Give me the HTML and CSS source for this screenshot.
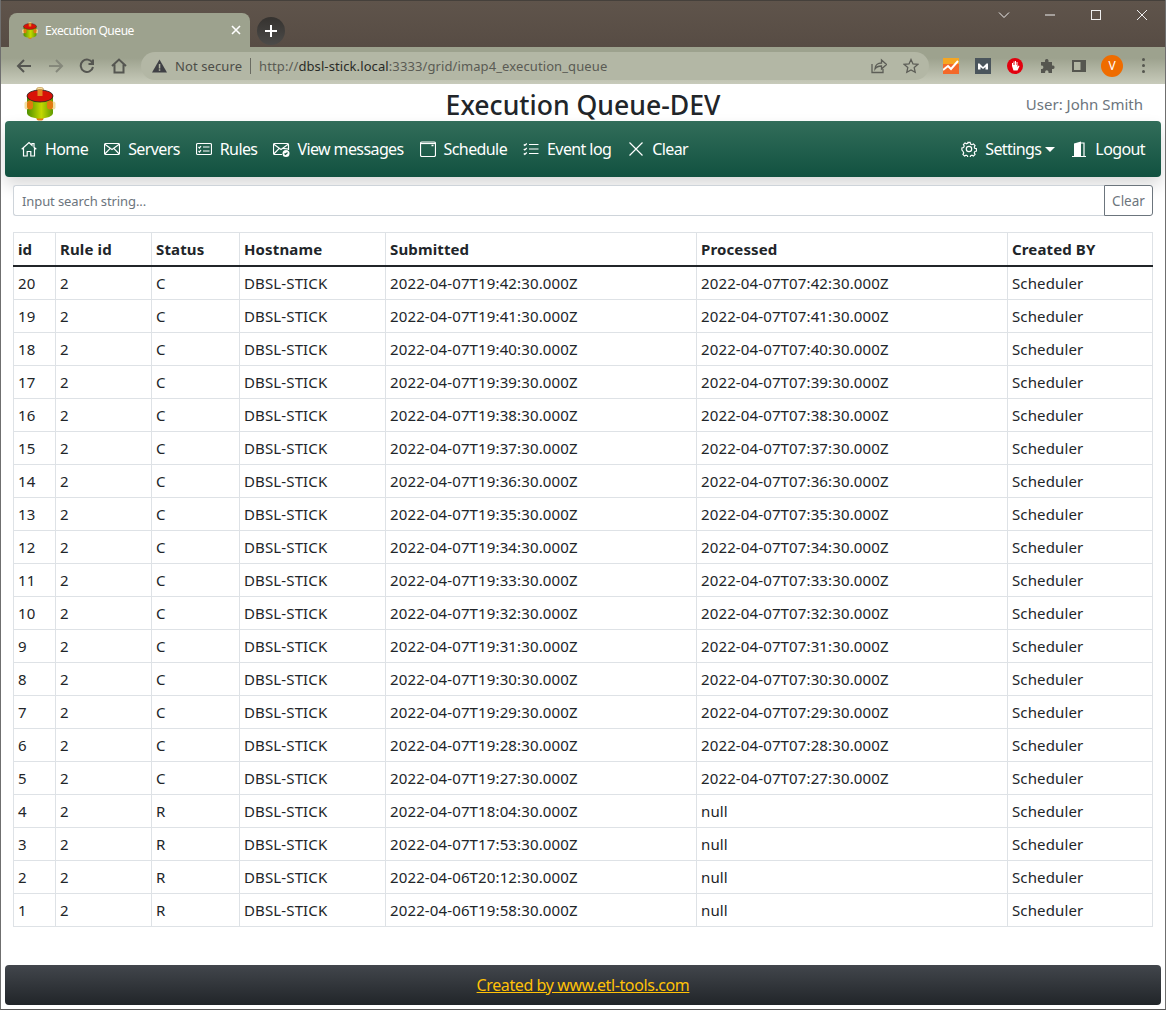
FILE: index.html

```html
<!DOCTYPE html>
<html lang="en">
<head>
  <meta charset="UTF-8" />
  <title>Execution Queue</title>
  <link rel="stylesheet" href="styles.css">
</head>
<body>
  <svg class="defs" width="0" height="0">
    <defs>
      <linearGradient id="drum" x1="0" x2="1" y1="0" y2="0">
        <stop offset="0" stop-color="#4d8f00" />
        <stop offset="0.55" stop-color="#c4d800" />
        <stop offset="1" stop-color="#5f9a00" />
      </linearGradient>
      <symbol id="logo" viewBox="0 0 32 34">
        <rect x="12.5" y="0.5" width="7" height="7" rx="2" fill="#f3dfa0" stroke="#b98a3c" stroke-width="0.6" />
        <rect x="12.5" y="28" width="7" height="5.5" rx="2" fill="#e07a10" />
        <path d="M3 9v17c0 3 6 5.500 13 5.500s13-2.500 13-5.500V9z" fill="url(#drum)" />
        <ellipse cx="16" cy="9" rx="13" ry="6" fill="#d81208" stroke="#222" stroke-width="0.8" />
        <rect x="13.500" y="2.500" width="5" height="6.500" fill="#e08a20" />
        <rect x="0.500" y="14.500" width="4" height="8" rx="2" fill="#f3dfa0" />
        <rect x="3" y="13.500" width="6" height="9" rx="3" fill="#e07a10" />
        <rect x="27.500" y="14.500" width="4" height="8" rx="2" fill="#f3dfa0" />
        <rect x="23" y="13.500" width="6" height="9" rx="3" fill="#e07a10" />
      </symbol>
    </defs>
  </svg>

  <div class="chrome">
    <div class="tabstrip">
      <div class="tab">
        <svg class="favicon" width="16" height="17"><use href="#logo" /></svg>
        <span class="tab-title">Execution Queue</span>
        <svg class="tab-close" width="10" height="10" viewBox="0 0 10 10"><path d="M1 1l8 8M9 1l-8 8" /></svg>
      </div>
      <div class="new-tab">
        <svg width="14" height="14" viewBox="0 0 14 14"><path d="M7 1v12M1 7h12" /></svg>
      </div>
      <div class="win-controls">
        <svg width="12" height="12" viewBox="0 0 12 12"><path d="M1 3.500l5 5 5-5" /></svg>
        <svg width="12" height="12" viewBox="0 0 12 12"><path d="M1 6h10" /></svg>
        <svg width="12" height="12" viewBox="0 0 12 12"><rect x="1.500" y="1.500" width="9" height="9" /></svg>
        <svg width="12" height="12" viewBox="0 0 12 12"><path d="M1 1l10 10M11 1L1 11" /></svg>
      </div>
    </div>
    <div class="toolbar">
      <svg class="tool" width="16" height="16" viewBox="0 0 16 16"><path d="M15 8H2M8 2L2 8l6 6" /></svg>
      <svg class="tool tool-off" width="16" height="16" viewBox="0 0 16 16"><path d="M1 8h13M8 2l6 6-6 6" /></svg>
      <svg class="tool" width="16" height="16" viewBox="0 0 16 16"><path d="M13.500 5A6.200 6.200 0 1 0 14 9M14 1.500V6H9.500" /></svg>
      <svg class="tool" width="16" height="16" viewBox="0 0 16 16"><path d="M1 8l7-6.500L15 8M3.500 6.500V14.500h9V6.500" /></svg>
      <div class="omnibox">
        <svg class="warn" width="15" height="14" viewBox="0 0 15 14"><path d="M7.500 0.500L15 13.500H0z" /><rect class="warn-mark" x="6.800" y="5" width="1.500" height="4.500" /><rect class="warn-mark" x="6.800" y="10.300" width="1.500" height="1.500" /></svg>
        <span class="not-secure">Not secure</span>
        <span class="omni-sep"></span>
        <span class="url">http://<b>dbsl-stick.local</b>:3333/grid/imap4_execution_queue</span>
        <svg class="omni-icon share" width="16" height="16" viewBox="0 0 16 16"><path d="M1 6v8.500h11V11M4 11c0-4 3-6 6.500-6V2l5 4.500-5 4.500V8C8 8 5.500 8.500 4 11z" /></svg>
        <svg class="omni-icon" width="16" height="16" viewBox="0 0 16 16"><path d="M8 1.500l2 4.400 4.800.5-3.600 3.200 1 4.700L8 11.900l-4.200 2.400 1-4.700L1.200 6.400 6 5.900z" /></svg>
      </div>
      <div class="extensions">
        <svg width="16" height="16" viewBox="0 0 16 16"><rect width="16" height="16" fill="#f4692a" /><rect width="16" height="6" fill="#f5a623" /><path class="ext-line" d="M0 12l5-4 3 3 7-8" /></svg>
        <svg width="16" height="16" viewBox="0 0 16 16"><rect width="16" height="16" fill="#4a555c" /><path class="ext-m" d="M3 11.500V5.500h1.500L8 9l3.500-3.500H13v6h-2.500V9L8 11 5.500 9v2.500z" /></svg>
        <svg width="16" height="16" viewBox="0 0 16 16"><circle cx="8" cy="8" r="8" fill="#e2000f" /><path class="ext-m" d="M5 8V5h1v2h.500V3.500h1V7H8V3h1v4h.500V4h1v5l1-1.500 1 .5-2 4.500H6.500z" /></svg>
        <svg width="16" height="16" viewBox="0 0 16 16"><path class="ext-fill" d="M6 2.500a1.800 1.800 0 0 1 3.500 0V4H13v3.500h1.200a1.800 1.800 0 0 1 0 3.500H13v4H9.500v-1a1.700 1.700 0 0 0-3.400 0v1H2v-4h1a1.800 1.800 0 0 0 0-3.500H2V4h4z" /></svg>
        <svg width="16" height="16" viewBox="0 0 16 16"><rect x="1" y="2" width="14" height="12" class="ext-fill" /><rect x="3" y="4" width="6.500" height="8" fill="#b2b6a3" /></svg>
        <span class="avatar">V</span>
        <span class="kebab"><i></i><i></i><i></i></span>
      </div>
    </div>
  </div>

  <div class="page">
    <header class="app-head">
      <svg class="app-logo" width="32" height="34"><use href="#logo" /></svg>
      <h1>Execution Queue-DEV</h1>
      <span class="user">User: John Smith</span>
    </header>

    <nav class="navbar">
      <a class="nav-item"><svg class="ico" viewBox="0 0 16 16"><path d="M.7 8.300L8 1.500l3 2.800V2.500h2v3.700l2.300 2.100M2.500 7v8h3.700v-4.500h3.600V15h3.700V7" /></svg>Home</a>
      <a class="nav-item"><svg class="ico" viewBox="0 0 16 16"><rect x=".5" y="2.500" width="15" height="11" rx="1.300" /><path d="M.8 3.200L8 8.500l7.200-5.300M.8 13l5.400-5.700M15.200 13L9.800 7.300" /></svg>Servers</a>
      <a class="nav-item"><svg class="ico" viewBox="0 0 16 16"><rect x=".5" y="2.500" width="15" height="11" rx="1.300" /><path d="M7 6h6.500M7 10h6.500M2.500 6l1 1 1.500-2M2.500 10l1 1 1.500-2" /></svg>Rules</a>
      <a class="nav-item"><svg class="ico ico-wide" viewBox="0 0 17 16"><path d="M9 13.500H2A1.300 1.300 0 0 1 .5 12.200V3.800A1.300 1.300 0 0 1 2 2.500h12a1.300 1.300 0 0 1 1.500 1.300V9" /><path d="M.8 3.200L8 8.500l7.200-5.300M.8 13l5.400-5.700M15.200 8L9.800 7.300" /><circle class="ico-solid" cx="13" cy="12.500" r="3.500" /><path class="ico-tick" d="M11.500 12.500l1 1 2-2" /></svg>View messages</a>
      <a class="nav-item"><svg class="ico" viewBox="0 0 16 16"><rect x=".5" y="1" width="15" height="14.500" rx="1.500" /><path d="M1 2.500h14" /><path class="ico-dash" d="M11.500 4.500h2" /></svg>Schedule</a>
      <a class="nav-item"><svg class="ico" viewBox="0 0 16 16"><path d="M6 3.500h9.500M6 8h9.500M6 12.500h9.500M.8 3.500l1 1 2-2M.8 8l1 1 2-2M.8 12.500l1 1 2-2" /></svg>Event log</a>
      <a class="nav-item nav-clear"><svg class="ico ico-x" viewBox="0 0 14 14"><path d="M.5.500l13 13M13.500.500l-13 13" /></svg>Clear</a>
      <span class="nav-gap"></span>
      <a class="nav-item"><svg class="ico" viewBox="0 0 16 16"><circle cx="8" cy="8" r="2.700" /><path d="M6.800 1h2.400l.4 1.800 1.500.7 1.600-.9 1.700 1.700-.9 1.600.7 1.500 1.800.4v2.400l-1.800.4-.7 1.500.9 1.600-1.700 1.700-1.600-.9-1.500.7-.4 1.800H6.800l-.4-1.800-1.500-.7-1.600.9-1.700-1.700.9-1.600-.7-1.500L.5 9.200V6.800l1.800-.4.700-1.500-.9-1.600 1.700-1.700 1.600.9 1.500-.7z" transform="translate(.4 .4) scale(.95)" /></svg>Settings<span class="caret"></span></a>
      <a class="nav-item"><svg class="ico" viewBox="0 0 16 16"><path class="door" d="M3 15V2.500L10 .5V15z" /><path d="M1 15.500h14M10 2h3v13.500" /></svg>Logout</a>
    </nav>

    <div class="search">
      <input class="search-input" type="text" placeholder="Input search string...">
      <button class="search-clear">Clear</button>
    </div>

    <div class="grid-wrap">
      <table class="grid">
        <colgroup>
          <col class="c-id"><col class="c-rule"><col class="c-status"><col class="c-host"><col class="c-date"><col class="c-date"><col>
        </colgroup>
        <thead>
          <tr>
            <th>id</th>
            <th>Rule id</th>
            <th>Status</th>
            <th>Hostname</th>
            <th>Submitted</th>
            <th>Processed</th>
            <th>Created BY</th>
          </tr>
        </thead>
        <tbody>
          <tr><td>20</td><td>2</td><td>C</td><td>DBSL-STICK</td><td>2022-04-07T19:42:30.000Z</td><td>2022-04-07T07:42:30.000Z</td><td>Scheduler</td></tr>
          <tr><td>19</td><td>2</td><td>C</td><td>DBSL-STICK</td><td>2022-04-07T19:41:30.000Z</td><td>2022-04-07T07:41:30.000Z</td><td>Scheduler</td></tr>
          <tr><td>18</td><td>2</td><td>C</td><td>DBSL-STICK</td><td>2022-04-07T19:40:30.000Z</td><td>2022-04-07T07:40:30.000Z</td><td>Scheduler</td></tr>
          <tr><td>17</td><td>2</td><td>C</td><td>DBSL-STICK</td><td>2022-04-07T19:39:30.000Z</td><td>2022-04-07T07:39:30.000Z</td><td>Scheduler</td></tr>
          <tr><td>16</td><td>2</td><td>C</td><td>DBSL-STICK</td><td>2022-04-07T19:38:30.000Z</td><td>2022-04-07T07:38:30.000Z</td><td>Scheduler</td></tr>
          <tr><td>15</td><td>2</td><td>C</td><td>DBSL-STICK</td><td>2022-04-07T19:37:30.000Z</td><td>2022-04-07T07:37:30.000Z</td><td>Scheduler</td></tr>
          <tr><td>14</td><td>2</td><td>C</td><td>DBSL-STICK</td><td>2022-04-07T19:36:30.000Z</td><td>2022-04-07T07:36:30.000Z</td><td>Scheduler</td></tr>
          <tr><td>13</td><td>2</td><td>C</td><td>DBSL-STICK</td><td>2022-04-07T19:35:30.000Z</td><td>2022-04-07T07:35:30.000Z</td><td>Scheduler</td></tr>
          <tr><td>12</td><td>2</td><td>C</td><td>DBSL-STICK</td><td>2022-04-07T19:34:30.000Z</td><td>2022-04-07T07:34:30.000Z</td><td>Scheduler</td></tr>
          <tr><td>11</td><td>2</td><td>C</td><td>DBSL-STICK</td><td>2022-04-07T19:33:30.000Z</td><td>2022-04-07T07:33:30.000Z</td><td>Scheduler</td></tr>
          <tr><td>10</td><td>2</td><td>C</td><td>DBSL-STICK</td><td>2022-04-07T19:32:30.000Z</td><td>2022-04-07T07:32:30.000Z</td><td>Scheduler</td></tr>
          <tr><td>9</td><td>2</td><td>C</td><td>DBSL-STICK</td><td>2022-04-07T19:31:30.000Z</td><td>2022-04-07T07:31:30.000Z</td><td>Scheduler</td></tr>
          <tr><td>8</td><td>2</td><td>C</td><td>DBSL-STICK</td><td>2022-04-07T19:30:30.000Z</td><td>2022-04-07T07:30:30.000Z</td><td>Scheduler</td></tr>
          <tr><td>7</td><td>2</td><td>C</td><td>DBSL-STICK</td><td>2022-04-07T19:29:30.000Z</td><td>2022-04-07T07:29:30.000Z</td><td>Scheduler</td></tr>
          <tr><td>6</td><td>2</td><td>C</td><td>DBSL-STICK</td><td>2022-04-07T19:28:30.000Z</td><td>2022-04-07T07:28:30.000Z</td><td>Scheduler</td></tr>
          <tr><td>5</td><td>2</td><td>C</td><td>DBSL-STICK</td><td>2022-04-07T19:27:30.000Z</td><td>2022-04-07T07:27:30.000Z</td><td>Scheduler</td></tr>
          <tr><td>4</td><td>2</td><td>R</td><td>DBSL-STICK</td><td>2022-04-07T18:04:30.000Z</td><td>null</td><td>Scheduler</td></tr>
          <tr><td>3</td><td>2</td><td>R</td><td>DBSL-STICK</td><td>2022-04-07T17:53:30.000Z</td><td>null</td><td>Scheduler</td></tr>
          <tr><td>2</td><td>2</td><td>R</td><td>DBSL-STICK</td><td>2022-04-06T20:12:30.000Z</td><td>null</td><td>Scheduler</td></tr>
          <tr><td>1</td><td>2</td><td>R</td><td>DBSL-STICK</td><td>2022-04-06T19:58:30.000Z</td><td>null</td><td>Scheduler</td></tr>
        </tbody>
      </table>
    </div>

    <footer class="footer">
      <a class="footer-link" href="#">Created by www.etl-tools.com</a>
    </footer>
  </div>
</body>
</html>
```

FILE: styles.css

```css
* {
  box-sizing: border-box;
}
html, body {
  margin: 0;
  height: 1010px;
  overflow: hidden;
}
body {
  font-family: "Noto Sans", "Open Sans", sans-serif;
  font-size: 16px;
  color: #212529;
  background-color: #fff;
  display: flex;
  flex-direction: column;
  border-left: 1px solid #6f6f6f;
  border-right: 1px solid #6f6f6f;
  border-bottom: 1px solid #555;
}
.defs {
  position: absolute;
}

/* browser frame */
.chrome {
  height: 84px;
  flex: none;
  border-top: 1px solid #45403b;
  border-bottom: 1px solid #77796f;
}
.tabstrip {
  height: 46px;
  display: flex;
  align-items: flex-end;
  background: linear-gradient(#5f544b, #574c44);
  padding-left: 8px;
}
.tab {
  width: 241px;
  height: 34px;
  display: flex;
  align-items: center;
  padding: 0 9px 0 13px;
  background-color: #9da28e;
  border-radius: 8px 8px 0 0;
  color: #fff;
}
.favicon {
  flex: none;
}
.tab-title {
  font-size: 12px;
  margin-left: 7px;
  flex: 1;
  letter-spacing: -0.45px;
}
.tab-close path {
  stroke: #fff;
  stroke-width: 1.6;
  fill: none;
}
.new-tab {
  width: 28px;
  height: 28px;
  margin: 0 0 2px 7px;
  border-radius: 50%;
  background: linear-gradient(#35322f, #4c4b49);
  display: flex;
  align-items: center;
  justify-content: center;
}
.new-tab path {
  stroke: #fff;
  stroke-width: 2;
}
.win-controls {
  margin-left: auto;
  align-self: flex-start;
  display: flex;
  gap: 34px;
  padding: 8px 17px 0 0;
}
.win-controls svg {
  fill: none;
  stroke: #eee;
  stroke-width: 1;
}
.toolbar {
  height: 37px;
  display: flex;
  align-items: center;
  padding: 0 0 0 15px;
  background: linear-gradient(#9da28e 30%, #c8cbbb);
}
.tool {
  fill: none;
  stroke: #555651;
  stroke-width: 2;
  margin-right: 15.500px;
  flex: none;
}
.tool-off {
  stroke: #85887b;
}
.omnibox {
  width: 788px;
  height: 28px;
  margin-left: -1px;
  padding: 0 10px 0 11px;
  display: flex;
  align-items: center;
  background-color: #b3b7a5;
  border-radius: 14px;
  font-size: 13px;
  letter-spacing: 0.1px;
  color: #4c4d48;
}
.warn {
  fill: #3f4045;
  flex: none;
}
.warn-mark {
  fill: #b3b7a5;
}
.not-secure {
  margin-left: 8px;
}
.omni-sep {
  width: 1px;
  height: 16px;
  margin: 0 8px;
  background-color: #6a6b62;
}
.url {
  flex: 1;
  color: #5a5b54;
}
.url b {
  font-weight: 400;
  color: #2a2b27;
}
.omni-icon {
  fill: none;
  stroke: #5d5e57;
  stroke-width: 1.300;
  flex: none;
  margin-left: 16px;
}
.extensions {
  display: flex;
  align-items: center;
  gap: 16px;
  margin-left: 14px;
}
.ext-line {
  fill: none;
  stroke: #fff;
  stroke-width: 2;
}
.ext-m {
  fill: #fff;
}
.ext-fill {
  fill: #55564f;
}
.avatar {
  width: 22px;
  height: 22px;
  margin-left: -2px;
  border-radius: 50%;
  background-color: #ef6c00;
  color: #fff;
  font-size: 12px;
  display: flex;
  align-items: center;
  justify-content: center;
}
.kebab {
  display: flex;
  flex-direction: column;
  gap: 3px;
  margin-left: 3px;
}
.kebab i {
  width: 3px;
  height: 3px;
  border-radius: 50%;
  background-color: #55564f;
}

/* page */
.page {
  flex: 1;
  display: flex;
  flex-direction: column;
  padding: 0 4px 4px;
  min-height: 0;
}
.app-head {
  height: 37px;
  flex: none;
  position: relative;
  display: flex;
  justify-content: center;
}
.app-logo {
  position: absolute;
  left: 19px;
  top: 3px;
}
h1 {
  margin: 0;
  font-size: 26.600px;
  font-weight: 500;
  line-height: 43px;
  height: 37px;
}
.user {
  position: absolute;
  right: 18px;
  top: 10px;
  font-size: 15px;
  color: #6c757d;
}
.navbar {
  height: 56px;
  flex: none;
  display: flex;
  align-items: center;
  gap: 16px;
  padding: 0 16px;
  background: linear-gradient(#326d5a, #115140);
  border-radius: 4px;
  box-shadow: 0 8px 16px rgba(0, 0, 0, 0.15);
  color: #fff;
}
.nav-item {
  display: flex;
  align-items: center;
  white-space: nowrap;
  letter-spacing: -0.6px;
}
.nav-gap {
  flex: 1;
}
.ico {
  width: 16px;
  height: 16px;
  margin-right: 8px;
  fill: none;
  stroke: #fff;
  stroke-width: 1.200;
  flex: none;
}
.ico-wide {
  width: 17px;
  margin-right: 7px;
}
.ico-x {
  width: 14px;
  height: 14px;
  margin: 0 9px 0 2px;
}
.ico-solid {
  fill: #fff;
  stroke: none;
}
.ico-tick {
  stroke: #1d5c4a;
}
.ico-dash {
  stroke-width: 1.500;
}
.door {
  fill: #fff;
  stroke: none;
}
.caret {
  width: 0;
  height: 0;
  margin-left: 4px;
  border-top: 5px solid #fff;
  border-left: 5px solid transparent;
  border-right: 5px solid transparent;
}
.search {
  display: flex;
  margin: 8px 8px 0;
  flex: none;
  height: 31px;
}
.search-input {
  flex: 1;
  min-width: 0;
  height: 31px;
  padding: 0 8px;
  font: 13px "Noto Sans", sans-serif;
  letter-spacing: -0.1px;
  border: 1px solid #ced4da;
  border-right: 0;
  border-radius: 3px 0 0 3px;
  outline: none;
}
.search-input::placeholder {
  color: #6c757d;
  opacity: 1;
}
.search-clear {
  width: 49px;
  height: 31px;
  padding: 0;
  font: 13.500px "Noto Sans", sans-serif;
  color: #6c757d;
  background-color: #fff;
  border: 1px solid #6c757d;
  border-radius: 0 3px 3px 0;
}
.grid-wrap {
  margin: 16px 8px 0;
  flex: none;
}
.grid {
  width: 100%;
  table-layout: fixed;
  border-collapse: collapse;
  font-size: 15px;
  letter-spacing: 0.13px;
}
.c-id { width: 42px; }
.c-rule { width: 96px; }
.c-status { width: 88px; }
.c-host { width: 146px; }
.c-date { width: 311px; }
.grid th, .grid td {
  border: 1px solid #dee2e6;
  padding: 0 4px;
  height: 33px;
  text-align: left;
  white-space: nowrap;
  overflow: hidden;
}
.grid th {
  font-weight: 700;
  border-bottom: 2px solid #212529;
}
.grid tbody tr:first-child td {
  height: 34px;
}
.footer {
  margin-top: auto;
  height: 40px;
  flex: none;
  display: flex;
  align-items: center;
  justify-content: center;
  background: linear-gradient(#42464c, #212529);
  border-radius: 4px;
}
.footer-link {
  color: #ffc107;
  letter-spacing: -0.4px;
}
```
